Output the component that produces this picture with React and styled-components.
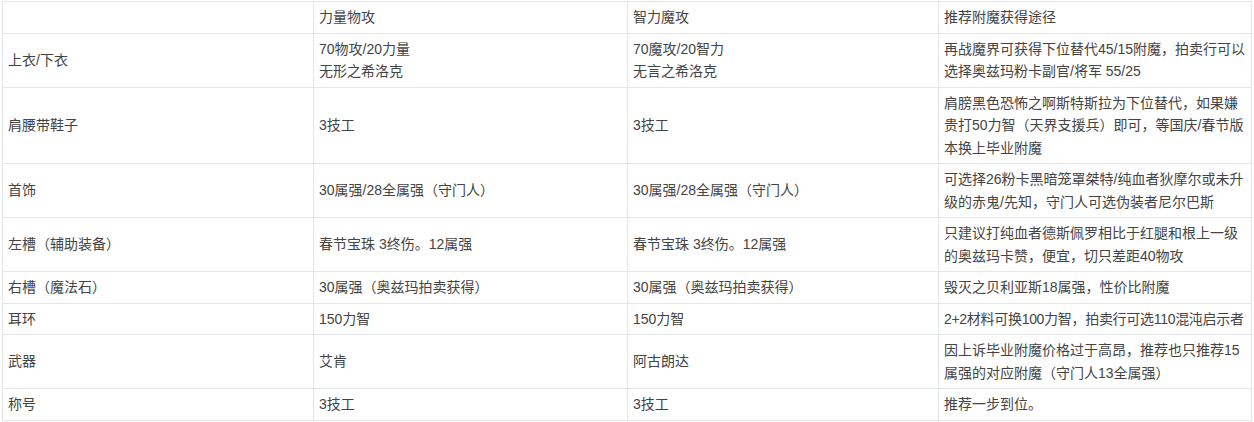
import React from 'react';
import styled, { createGlobalStyle } from 'styled-components';

const GlobalStyle = createGlobalStyle`
  html, body {
    margin: 0;
    padding: 0;
    background: #fff;
  }
`;

const rows = [
    {
        name: '上衣/下衣',
        str: ['70物攻/20力量', '无形之希洛克'],
        int: ['70魔攻/20智力', '无言之希洛克'],
        how: ['再战魔界可获得下位替代45/15附魔，拍卖行可以', '选择奥兹玛粉卡副官/将军 55/25'],
    },
    {
        name: '肩腰带鞋子',
        str: ['3技工'],
        int: ['3技工'],
        how: ['肩膀黑色恐怖之啊斯特斯拉为下位替代，如果嫌', '贵打50力智（天界支援兵）即可，等国庆/春节版', '本换上毕业附魔'],
    },
    {
        name: '首饰',
        str: ['30属强/28全属强（守门人）'],
        int: ['30属强/28全属强（守门人）'],
        how: ['可选择26粉卡黑暗笼罩桀特/纯血者狄摩尔或未升', '级的赤鬼/先知，守门人可选伪装者尼尔巴斯'],
    },
    {
        name: '左槽（辅助装备）',
        str: ['春节宝珠 3终伤。12属强'],
        int: ['春节宝珠 3终伤。12属强'],
        how: ['只建议打纯血者德斯佩罗相比于红腿和根上一级', '的奥兹玛卡赞，便宜，切只差距40物攻'],
    },
    {
        name: '右槽（魔法石）',
        str: ['30属强（奥兹玛拍卖获得）'],
        int: ['30属强（奥兹玛拍卖获得）'],
        how: ['毁灭之贝利亚斯18属强，性价比附魔'],
    },
    {
        name: '耳环',
        str: ['150力智'],
        int: ['150力智'],
        how: ['2+2材料可换100力智，拍卖行可选110混沌启示者'],
        tight: true,
    },
    {
        name: '武器',
        str: ['艾肯'],
        int: ['阿古朗达'],
        how: ['因上诉毕业附魔价格过于高昂，推荐也只推荐15', '属强的对应附魔（守门人13全属强）'],
    },
    {
        name: '称号',
        str: ['3技工'],
        int: ['3技工'],
        how: ['推荐一步到位。'],
    },
];

const Lines = ({ lines }) => lines.map((l, i) => <Line key={i}>{l}</Line>);

export default function App() {
    return (
        <>
            <GlobalStyle />
            <Page>
                <Table>
                    <colgroup>
                        <Col $w={311} />
                        <Col $w={314} />
                        <Col $w={311} />
                        <Col $w={313} />
                    </colgroup>
                    <tbody>
                        <tr>
                            <Cell></Cell>
                            <Cell>力量物攻</Cell>
                            <Cell>智力魔攻</Cell>
                            <Cell>推荐附魔获得途径</Cell>
                        </tr>
                        {rows.map(r => (
                            <tr key={r.name}>
                                <Cell>{r.name}</Cell>
                                <Cell><Lines lines={r.str} /></Cell>
                                <Cell><Lines lines={r.int} /></Cell>
                                <Cell $tight={r.tight}><Lines lines={r.how} /></Cell>
                            </tr>
                        ))}
                    </tbody>
                </Table>
            </Page>
        </>
    );
}

const Page = styled.div`
padding: 1px 0 0 2px;
`

const Table = styled.table`
border-collapse: collapse;
table-layout: fixed;
width: 1249px;
font-family: "Liberation Sans", "Noto Sans CJK SC", sans-serif;
font-size: 14px;
color: #444;
`

const Col = styled.col`
width: ${p => p.$w}px;
`

const Cell = styled.td`
border: 1px solid #e3e7ea;
padding: 4px 5px 4px 5px;
line-height: 22.5px;
vertical-align: middle;
text-align: left;
white-space: nowrap;
overflow: visible;
letter-spacing: ${p => (p.$tight ? '-0.3px' : '0')};
height: 22px;
`

const Line = styled.div`
white-space: nowrap;
`
